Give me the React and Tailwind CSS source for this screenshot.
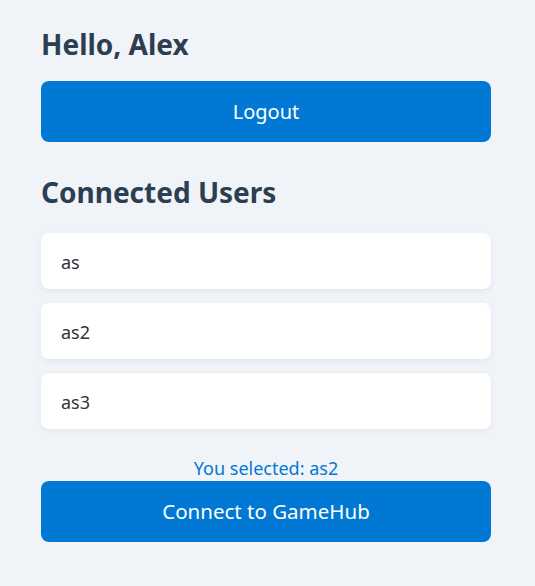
export default function App() {
  const users = ["as", "as2", "as3"];
  return (
    <div className="min-h-[586px] bg-[#f0f4f8] text-[#2c3e50]" style={{ fontFamily: '"Noto Sans", "Open Sans", sans-serif' }}>
      <div className="w-[450px] ml-[41px] pt-[24px]">
        <h2 className="text-[28px] font-bold leading-[40px] m-0">Hello, Alex</h2>
        <button className="mt-[17px] w-full h-[61px] rounded-[8px] bg-[#0078d4] text-white text-[20px]">Logout</button>
        <h2 className="mt-[30px] text-[28px] font-bold leading-[40px]">Connected Users</h2>
        <div className="mt-[21px] flex flex-col gap-[14px]">
          {users.map((u) => (
            <div key={u} className="h-[56px] flex items-center px-[20px] bg-white rounded-[8px] shadow-[0_2px_6px_rgba(0,0,0,0.06)] text-[18px] text-[#333]">
              <span className="relative top-[1px]">{u}</span>
            </div>
          ))}
        </div>
        <p className="mt-[27px] text-center text-[#0078d4] text-[18px] leading-[24px]">You selected: as2</p>
        <button className="mt-[1px] w-full h-[61px] rounded-[8px] bg-[#0078d4] text-white text-[20.5px]">Connect to GameHub</button>
      </div>
    </div>
  );
}
